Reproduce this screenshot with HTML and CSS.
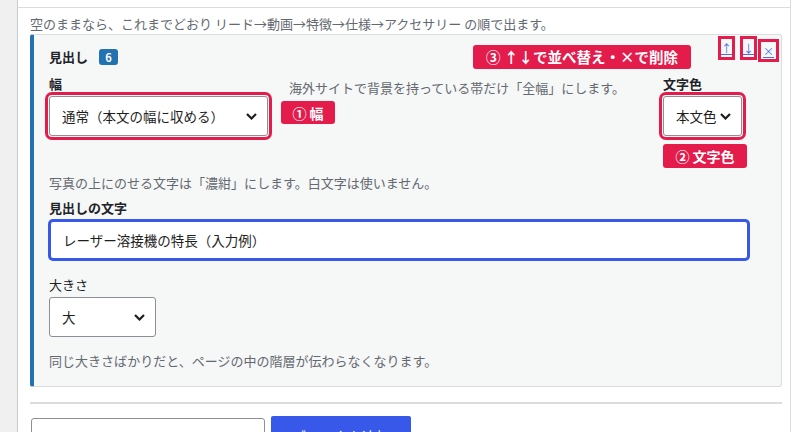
FILE: index.html
```html
<!DOCTYPE html>
<html lang="ja">
<head>
<meta charset="utf-8">
<title>見出し</title>
<link rel="stylesheet" href="styles.css">
</head>
<body>
<div class="screen">
  <div class="side"></div>
  <div class="panel">
    <div class="panel-top"></div>
    <div class="panel-body">
      <p class="hint">空のままなら、これまでどおり リード→動画→特徴→仕様→アクセサリー の順で出ます。</p>
      <section class="card">
        <header class="card-head">
          <div class="card-title"><span class="title-text">見出し</span><span class="badge">6</span></div>
          <span class="callout">③ ↑↓で並べ替え・×で削除</span>
          <div class="tools">
            <span class="tool t-up"><a>↑</a></span>
            <span class="tool t-down"><a>↓</a></span>
            <span class="tool t-del"><a>×</a></span>
          </div>
        </header>
        <div class="card-body">
          <div class="row3">
            <div class="field">
              <div class="lbl">幅</div>
              <div class="sel-wrap">
                <div class="sel sel-width marked"><span>通常（本文の幅に収める）</span><svg class="chev" width="11" height="7" viewBox="0 0 11 7"><path d="M1 1 L5.5 5.5 L10 1" fill="none" stroke="#1e1e1e" stroke-width="2.2"/></svg></div>
                <span class="note note-1">① 幅</span>
              </div>
            </div>
            <p class="desc desc-mid">海外サイトで背景を持っている帯だけ「全幅」にします。</p>
            <div class="field">
              <div class="lbl">文字色</div>
              <div class="sel-wrap">
                <div class="sel sel-color marked"><span>本文色</span><svg class="chev" width="11" height="7" viewBox="0 0 11 7"><path d="M1 1 L5.5 5.5 L10 1" fill="none" stroke="#1e1e1e" stroke-width="2.2"/></svg></div>
                <span class="note note-2">② 文字色</span>
              </div>
            </div>
          </div>
          <p class="desc desc-photo">写真の上にのせる文字は「濃紺」にします。白文字は使いません。</p>
          <div class="lbl lbl-text">見出しの文字</div>
          <div class="input">レーザー溶接機の特長（入力例）</div>
          <div class="lbl lbl-size">大きさ</div>
          <div class="sel sel-size"><span>大</span><svg class="chev" width="11" height="7" viewBox="0 0 11 7"><path d="M1 1 L5.5 5.5 L10 1" fill="none" stroke="#1e1e1e" stroke-width="2.2"/></svg></div>
          <p class="desc desc-size">同じ大きさばかりだと、ページの中の階層が伝わらなくなります。</p>
        </div>
      </section>
      <div class="divider"></div>
      <div class="actions">
        <span class="btn btn-sec">プレビュー表示</span>
        <span class="btn btn-pri">ブロックを追加</span>
      </div>
    </div>
  </div>
</div>
</body>
</html>
```
FILE: styles.css
```css
* { box-sizing: border-box; margin: 0; padding: 0; }
html, body { background: #fff; }
body {
  font-family: "Noto Sans CJK JP", "Noto Sans", sans-serif;
  font-size: 13px;
  line-height: 18px;
  color: #1d2327;
  width: 796px;
  height: 432px;
  overflow: hidden;
}
.screen { display: flex; height: 432px; }
.side {
  flex: none;
  width: 18px;
  background: #f0f0f1;
  border-right: 1px solid #c9cacc;
}
.panel {
  flex: none;
  width: 773px;
  border-right: 1px solid #dcdcde;
}
.panel-top {
  height: 8px;
  border-bottom: 1px solid #dcdcde;
}
.panel-body { padding: 0 8px 0 12px; }
.hint {
  margin-top: 7px;
  margin-bottom: 1px;
  color: #646970;
}
.card {
  background: #f6f7f7;
  border: 1px solid #dcdcde;
  border-left: 4px solid #2271b1;
  border-radius: 3px;
  padding: 0 2px 16px 15px;
}
.card-head {
  display: flex;
  align-items: flex-start;
}
.card-title {
  display: flex;
  align-items: center;
  margin-top: 13px;
  gap: 11px;
}
.title-text { font-weight: 700; color: #1d2327; }
.badge {
  display: flex;
  align-items: center;
  justify-content: center;
  width: 19px;
  height: 16px;
  border-radius: 3px;
  background: #2271b1;
  color: #fff;
  font-size: 11px;
  font-weight: 700;
  line-height: 16px;
}
.callout {
  margin-left: auto;
  margin-right: 27px;
  margin-top: 10px;
  width: 218px;
  height: 24px;
  border-radius: 3px;
  background: #e31c4c;
  color: #fff;
  font-size: 14.5px;
  font-weight: 700;
  line-height: 24px;
  text-align: center;
}
.tools { display: flex; align-items: flex-start; }
.tool {
  display: flex;
  align-items: center;
  justify-content: center;
  border: 3px solid #e31c4c;
  font-size: 11px;
}
.tool a {
  color: #4a6cf0;
  text-decoration: underline;
  line-height: 14px;
}
.t-up { width: 17px; height: 24px; margin-top: 1px; }
.t-down { width: 17px; height: 24px; margin-top: 1px; margin-left: 5px; }
.t-del { width: 21px; height: 23px; margin-top: 4px; margin-left: 1px; }
.card-body {
  margin-top: 6px;
  margin-right: 30px;
}
.row3 {
  display: grid;
  grid-template-columns: 219px 1fr 86px;
  column-gap: 21px;
}
.lbl {
  font-weight: 700;
  margin-bottom: 3px;
}
.sel-wrap { position: relative; }
.sel {
  display: flex;
  align-items: center;
  justify-content: space-between;
  height: 40px;
  background: #fff;
  border: 1px solid #8c8f94;
  border-radius: 3px;
  padding: 0 10px 0 12px;
  font-size: 13.5px;
  color: #1e1e1e;
}
.chev { flex: none; }
.sel-width { width: 219px; }
.sel-color { width: 79px; justify-content: flex-start; gap: 3px; padding-right: 8px; }
.sel-size { width: 107px; height: 40px; }
.marked {
  box-shadow: 0 0 0 1px #f6f7f7, 0 0 0 4px #e31c4c;
}
.note {
  position: absolute;
  display: flex;
  align-items: center;
  justify-content: center;
  height: 23px;
  border-radius: 3px;
  background: #e31c4c;
  color: #fff;
  font-size: 14px;
  font-weight: 700;
}
.note-1 { left: calc(100% + 13px); top: 5px; width: 54px; }
.note-2 { left: 0; top: 48px; width: 84px; height: 24px; }
.desc { color: #646970; }
.desc-mid { margin-top: 4px; }
.desc-photo { margin-top: 38px; }
.lbl-text { margin-top: 7px; }
.input {
  height: 40px;
  display: flex;
  align-items: center;
  background: #fff;
  border: 2px solid #3858e9;
  box-shadow: 0 0 0 1px #3858e9;
  border-radius: 4px;
  padding-left: 12px;
  font-size: 13.5px;
  color: #1e1e1e;
}
.lbl-size { margin-top: 16px; font-weight: 400; }
.desc-size { margin-top: 15px; }
.divider {
  margin-top: 15px;
  height: 2px;
  width: 752px;
  background: #dcdcde;
}
.actions {
  display: flex;
  align-items: flex-start;
  gap: 6px;
  margin-top: 12px;
}
.btn {
  display: flex;
  align-items: center;
  justify-content: center;
  height: 40px;
  font-size: 14px;
  border-radius: 3px;
}
.btn-sec {
  width: 234px;
  margin-left: 1px;
  margin-top: 2px;
  background: #fff;
  border: 1px solid #8c8f94;
  color: #2c3338;
}
.btn-pri {
  width: 140px;
  background: #3858e9;
  color: #fff;
  border-radius: 2px;
}
```
